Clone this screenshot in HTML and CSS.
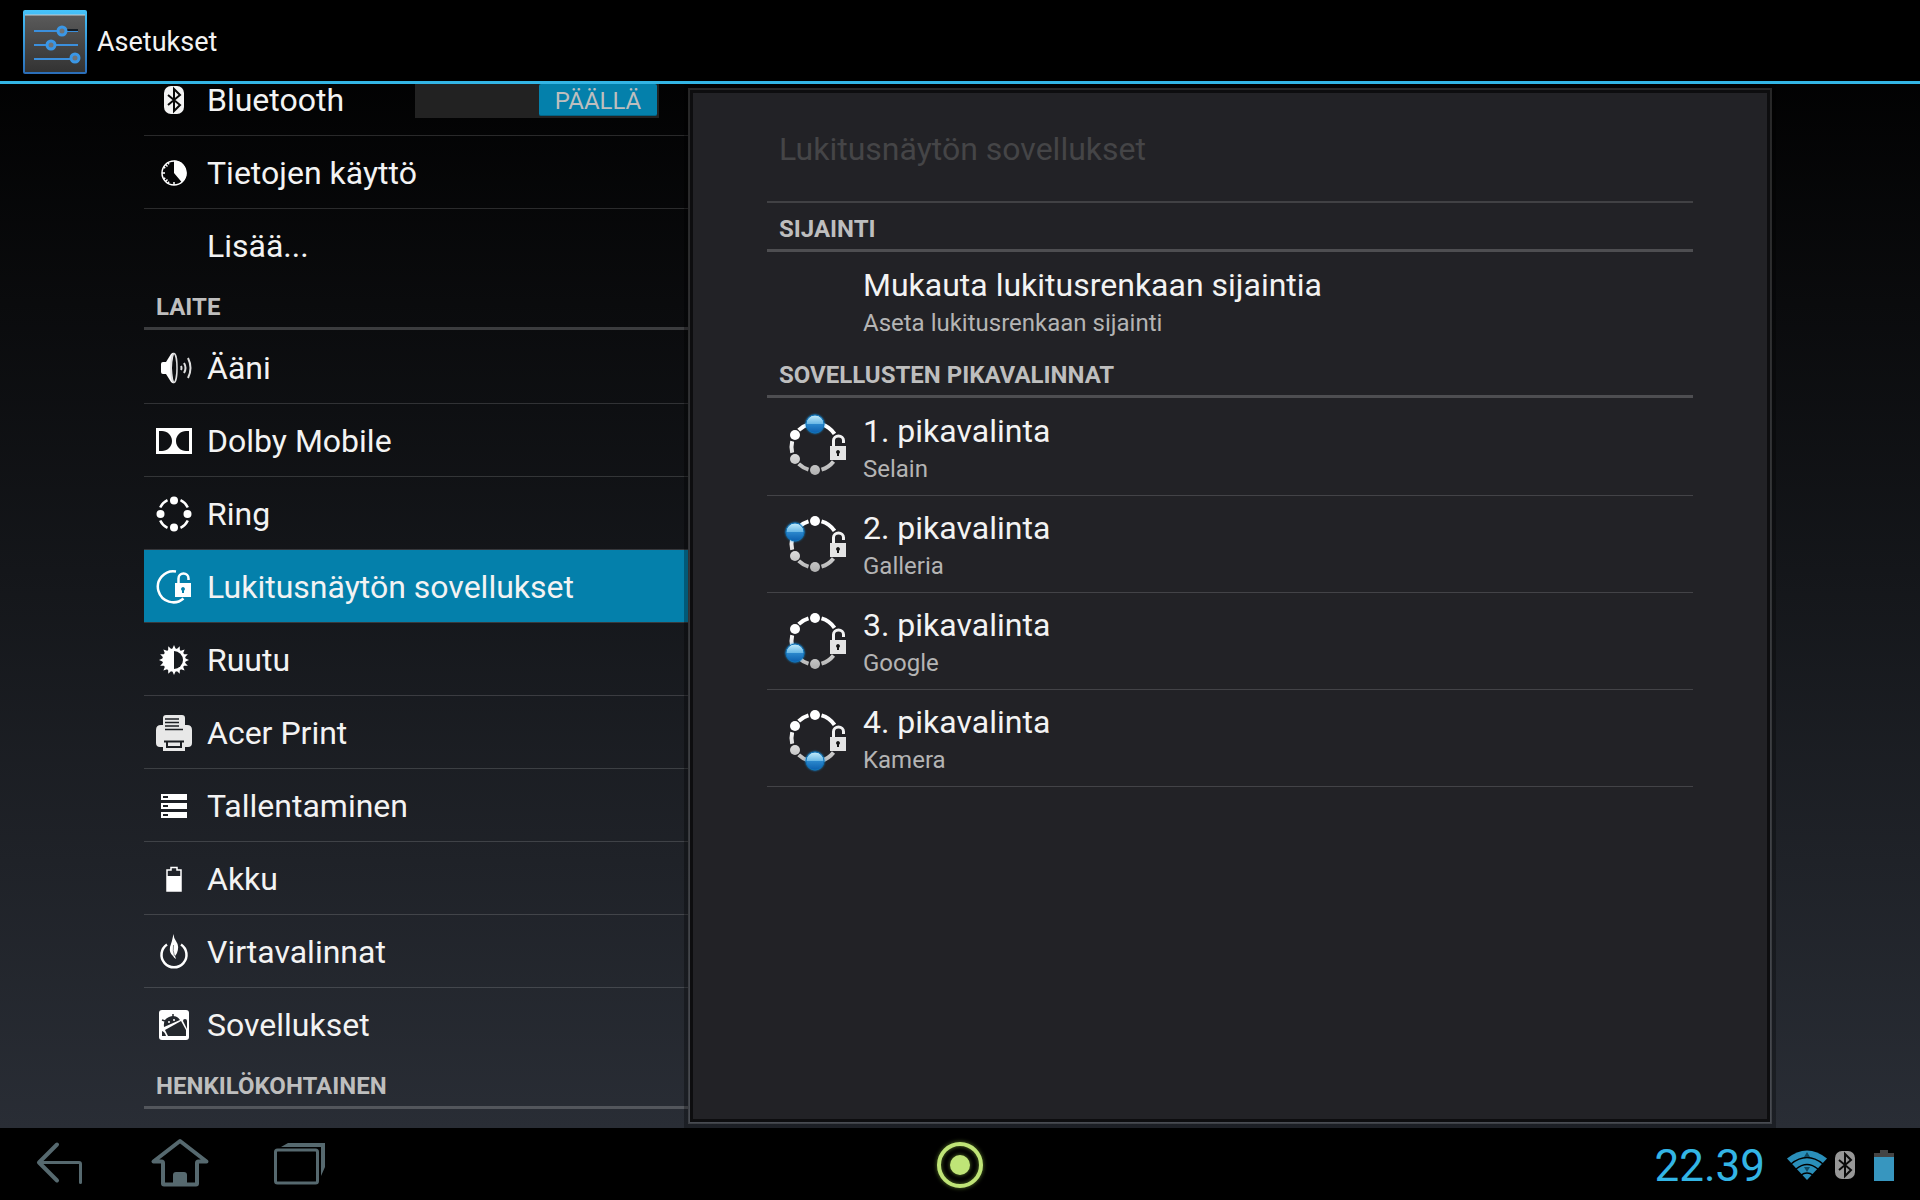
FILE: index.html
```html
<!DOCTYPE html>
<html lang="fi">
<head>
    <meta charset="UTF-8">
    <meta name="viewport" content="width=device-width, initial-scale=1.0">
    <title>Asetukset</title>
    <link rel="stylesheet" href="styles.css">
</head>
<body>

<svg class="defs" aria-hidden="true">
    <defs>
        <linearGradient id="silver" gradientUnits="userSpaceOnUse" x1="0" y1="12" x2="0" y2="62">
            <stop offset="0.3" stop-color="#ffffff"/>
            <stop offset="1" stop-color="#b4b4b4"/>
        </linearGradient>
        <linearGradient id="ball" x1="0" y1="0" x2="0" y2="1">
            <stop offset="0" stop-color="#c4ecfb"/>
            <stop offset="0.48" stop-color="#6bb9e6"/>
            <stop offset="0.52" stop-color="#2a86cb"/>
            <stop offset="1" stop-color="#0c5fae"/>
        </linearGradient>
        <symbol id="unlock-ring" viewBox="0 0 72 72">
            <g fill="none" stroke="url(#silver)" stroke-width="4">
                <path d="M42.5 13.4A23.5 23.5 0 0 1 55.5 22.9M54.5 50.5A23.5 23.5 0 0 1 42.5 58.6M29.5 58.6A23.5 23.5 0 0 1 19.7 52.9M13.2 41.7A23.5 23.5 0 0 1 13.2 30.3M19.7 19.1A23.5 23.5 0 0 1 29.5 13.4"/>
            </g>
            <g fill="url(#silver)">
                <circle cx="36" cy="13" r="5"/>
                <circle cx="16" cy="24" r="5"/>
                <circle cx="16" cy="48" r="5"/>
                <circle cx="36" cy="59" r="5"/>
            </g>
            <path d="M54.5 36V29.5A5 4.5 0 0 1 64.5 29.5V32" fill="none" stroke="#f2f2f2" stroke-width="3"/>
            <rect x="51" y="35" width="16" height="14" fill="#e4e4e4"/>
            <path d="M59 39a2 2 0 0 1 1 3.7V45h-2v-2.3A2 2 0 0 1 59 39z" fill="#151515"/>
        </symbol>
        <symbol id="bt" viewBox="0 0 20 28">
            <rect width="20" height="28" rx="7" fill="currentColor"/>
            <path d="M4 9l12 10-6 6V3l6 6L4 19" fill="none" stroke="#0a0a0a" stroke-width="2"/>
        </symbol>
    </defs>
</svg>

<header class="action-bar">
    <svg class="app-icon" viewBox="0 0 64 64">
        <defs>
            <linearGradient id="tile" x1="0" y1="0" x2="0" y2="1">
                <stop offset="0" stop-color="#5a5a5a"/>
                <stop offset="1" stop-color="#333333"/>
            </linearGradient>
            <linearGradient id="frame" x1="0" y1="0" x2="0" y2="1">
                <stop offset="0" stop-color="#45c3fa"/>
                <stop offset="1" stop-color="#2b6db8"/>
            </linearGradient>
        </defs>
        <rect width="64" height="64" rx="2" fill="url(#frame)"/>
        <path d="M2 5h60v57H2z" fill="url(#tile)"/>
        <path d="M2 5h60" stroke="#c3cdd2"/>
        <path d="M11 21h44M11 35h44M11 49h44" stroke="#3b8fdc" stroke-width="2"/>
        <path d="M44 20h11" stroke="#161d24" stroke-width="2"/>
        <g fill="#6f7377" stroke="#3a97e6" stroke-width="3">
            <circle cx="39" cy="21" r="4"/>
            <circle cx="28" cy="35" r="4"/>
            <circle cx="52" cy="48" r="4"/>
        </g>
    </svg>
    <h1>Asetukset</h1>
</header>

<main class="content">
    <nav class="headers" aria-label="Asetukset">
        <ul class="header-list">
            <li class="row">
                <svg class="icon" viewBox="0 0 36 36"><use href="#bt" x="8" y="4" width="20" height="28"/></svg>
                <a href="#bluetooth" id="bluetooth-name">Bluetooth</a>
                <label class="switch">
                    <input type="checkbox" checked aria-labelledby="bluetooth-name">
                    <span class="thumb">PÄÄLLÄ</span>
                </label>
            </li>
            <li>
                <a class="row" href="#data">
                    <svg class="icon" viewBox="0 0 36 36">
                        <circle cx="18" cy="18" r="12" fill="none" stroke="#fff" stroke-width="1.5"/>
                        <path d="M18 18V5.5a12.5 12.5 0 0 1 8 22z" fill="#fff"/>
                        <path d="M6 18h3M18 27v3M9.5 9.5l2 2M9.5 26.5l2-2M12 7.6l1 1.7M12 28.4l1-1.7M7.6 12l1.7 1M7.6 24l1.7-1" stroke="#fff" stroke-width="1.5"/>
                    </svg>
                    <span>Tietojen käyttö</span>
                </a>
            </li>
            <li>
                <a class="row" href="#more">
                    <span class="icon"></span>
                    <span>Lisää...</span>
                </a>
            </li>
            <li class="section">LAITE</li>
            <li>
                <a class="row" href="#sound">
                    <svg class="icon" viewBox="0 0 36 36">
                        <path d="M5 14q0-2 2-2h3l5-8q2-2 3-1-4 15 0 30-1 1-3-1l-5-8H7q-2 0-2-2z" fill="#fff"/>
                        <ellipse cx="18" cy="18" rx="3" ry="14.5" fill="none" stroke="#ddd" stroke-width="1.5"/>
                        <path d="M25 16q1 2 0 4M28 13q3 5 0 10M32 8q5 10 0 20" fill="none" stroke="#ddd" stroke-width="2"/>
                    </svg>
                    <span>Ääni</span>
                </a>
            </li>
            <li>
                <a class="row" href="#dolby">
                    <svg class="icon" viewBox="0 0 36 36">
                        <path fill-rule="evenodd" fill="#fff" d="M0 5h36v26H0zM3 8v20h3c5 0 10-4 10-10S11 8 6 8zM33 8v20h-3c-5 0-10-4-10-10S25 8 30 8z"/>
                    </svg>
                    <span>Dolby Mobile</span>
                </a>
            </li>
            <li>
                <a class="row" href="#ring">
                    <svg class="icon" viewBox="0 0 36 36">
                        <path d="M24.5 4.2A15.2 15.2 0 0 1 31.8 11.5M31.8 24.5A15.2 15.2 0 0 1 24.5 31.8M11.5 31.8A15.2 15.2 0 0 1 4.2 24.5M4.2 11.5A15.2 15.2 0 0 1 11.5 4.2" fill="none" stroke="#fff" stroke-width="2.5"/>
                        <g fill="#fff">
                            <circle cx="18" cy="4.5" r="4"/>
                            <circle cx="31.5" cy="18" r="4"/>
                            <circle cx="18" cy="31.5" r="4"/>
                            <circle cx="4.5" cy="18" r="4"/>
                        </g>
                    </svg>
                    <span>Ring</span>
                </a>
            </li>
            <li>
                <a class="row selected" href="#lock" aria-current="page">
                    <svg class="icon" viewBox="0 0 36 36">
                        <path d="M20 2.500A15.5 15.5 0 1 0 27.5 29.500" fill="none" stroke="#fff" stroke-width="2.5"/>
                        <path d="M22.5 15V9.5a5 5 0 0 1 10 0V11" fill="none" stroke="#fff" stroke-width="2.5"/>
                        <rect x="19" y="14" width="16" height="14" fill="#fff"/>
                        <path d="M27 18a2 2 0 0 1 1 3.7V24h-2v-2.3A2 2 0 0 1 27 18z" fill="#0480ab"/>
                    </svg>
                    <span>Lukitusnäytön sovellukset</span>
                </a>
            </li>
            <li>
                <a class="row" href="#display">
                    <svg class="icon" viewBox="0 0 36 36">
                        <circle cx="18" cy="18" r="11.5" fill="#fff"/>
                        <g fill="#fff">
                            <path id="tooth" d="M18 3l2.2 5v20L18 33l-2.2-5V8z"/>
                            <use href="#tooth" transform="rotate(22.5 18 18)"/>
                            <use href="#tooth" transform="rotate(45 18 18)"/>
                            <use href="#tooth" transform="rotate(67.5 18 18)"/>
                            <use href="#tooth" transform="rotate(90 18 18)"/>
                            <use href="#tooth" transform="rotate(112.5 18 18)"/>
                            <use href="#tooth" transform="rotate(135 18 18)"/>
                            <use href="#tooth" transform="rotate(157.5 18 18)"/>
                        </g>
                        <path d="M18 9a9 9 0 0 1 0 18z" fill="#181b1f"/>
                    </svg>
                    <span>Ruutu</span>
                </a>
            </li>
            <li>
                <a class="row" href="#print">
                    <svg class="icon" viewBox="0 0 36 36">
                        <path d="M7 10V3q0-3 3-3h16q3 0 3 3v7h2q5 0 5 5v13q0 4-4 4h-3v4H7v-4H4q-4 0-4-4V15q0-5 5-5z" fill="#e8e8e8"/>
                        <path d="M9 4h14M9 7.5h14M9 11h14M9 14.5h18" stroke="#1b1e22" stroke-width="1.5"/>
                        <path d="M8 26.5h20M11 27v5h14v-5" fill="none" stroke="#1b1e22" stroke-width="2"/>
                    </svg>
                    <span>Acer Print</span>
                </a>
            </li>
            <li>
                <a class="row" href="#storage">
                    <svg class="icon" viewBox="0 0 36 36">
                        <path d="M5 6h26v6H5zM5 15h26v6H5zM5 24h26v6H5z" fill="#fff"/>
                        <path d="M7 9h5M7 18h5M7 27h5" stroke="#1c1f24" stroke-width="2"/>
                    </svg>
                    <span>Tallentaminen</span>
                </a>
            </li>
            <li>
                <a class="row" href="#battery">
                    <svg class="icon" viewBox="0 0 36 36">
                        <path d="M11 30V9h4V6.5h6V9h4v21z" fill="none" stroke="#fff" stroke-width="1.5"/>
                        <path d="M11 15h14v15H11z" fill="#fff"/>
                    </svg>
                    <span>Akku</span>
                </a>
            </li>
            <li>
                <a class="row" href="#power">
                    <svg class="icon" viewBox="0 0 36 36">
                        <path d="M11 10.5a12.5 12.5 0 1 0 14 0" fill="none" stroke="#fff" stroke-width="2.5"/>
                        <path d="M17.5 0q0 4 3 8t.5 11q-1 2-2 3l1 3q-2-1-3-3-4-3-3-9 2-5 3.5-13z" fill="#fff"/>
                        <path d="M18.5 22q-2-5-1-11" fill="none" stroke="#8a8d90"/>
                    </svg>
                    <span>Virtavalinnat</span>
                </a>
            </li>
            <li>
                <a class="row" href="#apps">
                    <svg class="icon" viewBox="0 0 36 36">
                        <rect x="3" y="3" width="30" height="30" rx="3" fill="#fff"/>
                        <g fill="#24282d">
                            <path d="M8 20q-1-8 5-10 7-3 11 3z"/>
                            <path d="M9 23l16-9 5 9v6H12z"/>
                            <path d="M6 24q3 1 4 5H6z"/>
                            <path d="M27 14q0-2 2-2t2 2v8z"/>
                        </g>
                        <path d="M17 10V7M9 14l-3-1" stroke="#24282d" stroke-width="1.5"/>
                        <circle cx="13" cy="15" r="1" fill="#fff"/>
                        <circle cx="18" cy="13" r="1" fill="#fff"/>
                    </svg>
                    <span>Sovellukset</span>
                </a>
            </li>
            <li class="section">HENKILÖKOHTAINEN</li>
        </ul>
    </nav>

    <section class="pane" aria-labelledby="pane-title">
        <h2 class="pane-title" id="pane-title">Lukitusnäytön sovellukset</h2>
        <h3 class="section">SIJAINTI</h3>
        <a class="pref last" href="#position">
            <span class="pref-icon"></span>
            <span class="pref-text">
                <span class="pref-title">Mukauta lukitusrenkaan sijaintia</span>
                <span class="pref-summary">Aseta lukitusrenkaan sijainti</span>
            </span>
        </a>
        <h3 class="section">SOVELLUSTEN PIKAVALINNAT</h3>
        <a class="pref" href="#shortcut1">
            <svg class="pref-icon" viewBox="0 0 72 72">
                <use href="#unlock-ring"/>
                <circle class="ball" cx="36" cy="13" r="9"/>
            </svg>
            <span class="pref-text">
                <span class="pref-title">1. pikavalinta</span>
                <span class="pref-summary">Selain</span>
            </span>
        </a>
        <a class="pref" href="#shortcut2">
            <svg class="pref-icon" viewBox="0 0 72 72">
                <use href="#unlock-ring"/>
                <circle class="ball" cx="16" cy="24" r="9"/>
            </svg>
            <span class="pref-text">
                <span class="pref-title">2. pikavalinta</span>
                <span class="pref-summary">Galleria</span>
            </span>
        </a>
        <a class="pref" href="#shortcut3">
            <svg class="pref-icon" viewBox="0 0 72 72">
                <use href="#unlock-ring"/>
                <circle class="ball" cx="16" cy="48" r="9"/>
            </svg>
            <span class="pref-text">
                <span class="pref-title">3. pikavalinta</span>
                <span class="pref-summary">Google</span>
            </span>
        </a>
        <a class="pref" href="#shortcut4">
            <svg class="pref-icon" viewBox="0 0 72 72">
                <use href="#unlock-ring"/>
                <circle class="ball" cx="36" cy="59" r="9"/>
            </svg>
            <span class="pref-text">
                <span class="pref-title">4. pikavalinta</span>
                <span class="pref-summary">Kamera</span>
            </span>
        </a>
    </section>
</main>

<footer class="system-bar">
    <div class="nav-keys">
        <button type="button" aria-label="Takaisin">
            <svg viewBox="0 0 60 60" fill="none" stroke="currentColor" stroke-linecap="round" stroke-linejoin="round">
                <path d="M27 12.5L9 30.5l18 18" stroke-width="4"/>
                <path d="M9 30.5h40q1.5 0 1.5 1.5v18.500" stroke-width="3"/>
            </svg>
        </button>
        <button type="button" aria-label="Koti">
            <svg viewBox="0 0 60 60" fill="none" stroke="currentColor" stroke-linejoin="round">
                <path d="M30 9L3.5 29.5h8q1.500 0 1.500 1.500v20.500q0 1 1 1h32q1 0 1-1V31q0-1.500 1.500-1.500h8z" stroke-width="4"/>
                <path d="M23 52V43q0-3 3-3h8q3 0 3 3v9z" fill="currentColor" stroke="none"/>
            </svg>
        </button>
        <button type="button" aria-label="Viimeisimmät">
            <svg viewBox="0 0 60 60" fill="none" stroke="currentColor">
                <rect x="5.5" y="18" width="42" height="33" rx="2" stroke-width="3"/>
                <path d="M11 15l7-4h37v24l-4 9V15z" fill="currentColor" stroke="none"/>
            </svg>
        </button>
    </div>
    <button type="button" class="ring-key" aria-label="Ring">
        <svg viewBox="0 0 60 60">
            <circle cx="30" cy="30" r="21" fill="none" stroke="#bfe477" stroke-width="4"/>
            <circle cx="30" cy="30" r="10" fill="#bfe477"/>
        </svg>
    </button>
    <div class="status">
        <time class="clock">22.39</time>
        <svg class="wifi" viewBox="0 0 40 30">
            <path d="M20 30L0 8.500Q20-7.500 40 8.500z" fill="#2a8fba"/>
            <g fill="none" stroke="#000" stroke-width="1.5">
                <path d="M4 14q16-13 32 0M9 19q11-9 22 0M14 25q6-4 12 0"/>
            </g>
            <path d="M20 2l3 5h-6zM17 17h6l-3 5z" fill="#0f4a63"/>
        </svg>
        <svg class="status-bt" viewBox="0 0 20 30"><use href="#bt" width="20" height="30"/></svg>
        <svg class="status-battery" viewBox="0 0 20 31">
            <path d="M6 0h8v3h6v4H0V3h6z" fill="#444444"/>
            <path d="M0 7h20v24H0z" fill="#3796bf"/>
        </svg>
    </div>
</footer>

</body>
</html>
```
FILE: styles.css
```css
* {
    box-sizing: border-box;
}
body {
    margin: 0;
    height: 100vh;
    display: flex;
    flex-direction: column;
    overflow: hidden;
    font-family: Roboto, "Noto Sans", sans-serif;
    font-size: 32px;
    color: #f3f3f3;
    background: linear-gradient(#000000 3%, #292d35 94%);
}
a {
    color: inherit;
    text-decoration: none;
}
button {
    padding: 0;
    border: none;
    background: none;
    cursor: pointer;
}
h1, h2, h3, ul {
    margin: 0;
    padding: 0;
    font-weight: normal;
}
ul {
    list-style: none;
}
.defs {
    position: absolute;
    width: 0;
    height: 0;
}

/* top bar */
.action-bar {
    flex: none;
    display: flex;
    align-items: center;
    gap: 10px;
    height: 84px;
    padding: 2px 0 0 23px;
    background: #000;
    border-bottom: 3px solid #33b5e5;
}
.action-bar h1 {
    font-size: 27px;
}
.app-icon {
    width: 64px;
    height: 64px;
}

.content {
    flex: 1;
    min-height: 0;
    display: grid;
    grid-template-columns: 45fr 91fr;
    grid-template-rows: 100%;
    padding: 0 7.5%;
}

/* left list */
.headers {
    margin-right: -4px;
    overflow: hidden;
}
.header-list {
    margin-top: -21px; /* scrolled a little */
}
.row {
    display: flex;
    align-items: center;
    gap: 15px;
    height: 73px;
    padding: 1px 0 0 12px;
    border-bottom: 1px solid rgba(255, 255, 255, 0.15);
    line-height: 28px;
}
li:has(+ .section) .row {
    border-bottom: none;
    height: 72px;
}
.row.selected {
    background: #0480ab;
    background-clip: padding-box;
}
.icon {
    flex: none;
    width: 36px;
    height: 36px;
}
.section {
    height: 48px;
    margin: 1px 0;
    padding: 0 12px;
    border-bottom: 3px solid rgba(255, 255, 255, 0.2);
    color: #bebebe;
    font-size: 24px;
    font-weight: 700;
    line-height: 50px;
}

.switch {
    display: grid;
    align-items: center;
    width: 244px;
    height: 36px;
    margin-left: auto;
    margin-right: 29px;
}
.switch input,
.thumb {
    grid-area: 1 / 1;
}
.switch input {
    appearance: none;
    width: 100%;
    height: 100%;
    margin: 0;
    background: #222222;
}
.thumb {
    justify-self: end;
    z-index: 1;
    width: 118px;
    height: 32px;
    margin-right: 2px;
    padding-top: 3px;
    border-radius: 2px;
    background: #0480ab;
    border-bottom: 1px solid #036485;
    color: #bebebe;
    font-size: 24px;
    line-height: 28px;
    text-align: center;
}

/* right pane */
.pane {
    margin: 4px;
    padding: 3px 77px;
    border: 2px solid rgba(255, 255, 255, 0.15);
    background: #222226;
    background-clip: padding-box;
    box-shadow: inset 0 0 0 3px rgba(0, 0, 0, 0.6), 0 0 0 4px rgba(0, 0, 0, 0.3);
    z-index: 1;
}
.pane-title {
    height: 110px;
    padding: 0 12px;
    border-bottom: 2px solid #414144;
    color: #454547;
    font-size: 32px;
    line-height: 112px;
}
.pref {
    display: flex;
    align-items: center;
    gap: 12px;
    height: 97px;
    padding-left: 12px;
    border-bottom: 1px solid #434347;
}
.pref.last {
    height: 96px;
    border-bottom: none;
}
.pref-icon {
    flex: none;
    width: 72px;
    height: 72px;
}
.pref-text {
    display: flex;
    flex-direction: column;
    padding-top: 2px;
}
.pref-title {
    line-height: 42px;
}
.pref-summary {
    color: #b4b4b4;
    font-size: 24px;
    line-height: 34px;
}
.ball {
    fill: url(#ball);
    stroke: #1173b8;
    filter: drop-shadow(0 0 1px #1792e0);
}

/* bottom bar */
.system-bar {
    flex: none;
    display: grid;
    grid-template-columns: 1fr auto 1fr;
    align-items: center;
    height: 72px;
    background: #000;
}
.system-bar button svg {
    display: block;
    width: 60px;
    height: 60px;
    margin: 0 auto;
}
.nav-keys {
    display: flex;
    padding-bottom: 4px;
    color: #56696f;
}
.nav-keys button {
    width: 120px;
    color: inherit;
}
.ring-key {
    padding-top: 2px;
}
.ring-key svg {
    filter: drop-shadow(0 0 2px #5c7a2c);
}
.status {
    display: flex;
    align-items: center;
    justify-content: flex-end;
    padding: 2px 26px 0 0;
}
.clock {
    margin-right: 22px;
    padding-top: 2px;
    color: #33b5e5;
    font-size: 44px;
}
.wifi {
    width: 40px;
    height: 30px;
    margin-right: 8px;
}
.status-bt {
    width: 20px;
    height: 30px;
    margin-right: 19px;
    color: #979797;
}
.status-battery {
    width: 20px;
    height: 31px;
}
```
